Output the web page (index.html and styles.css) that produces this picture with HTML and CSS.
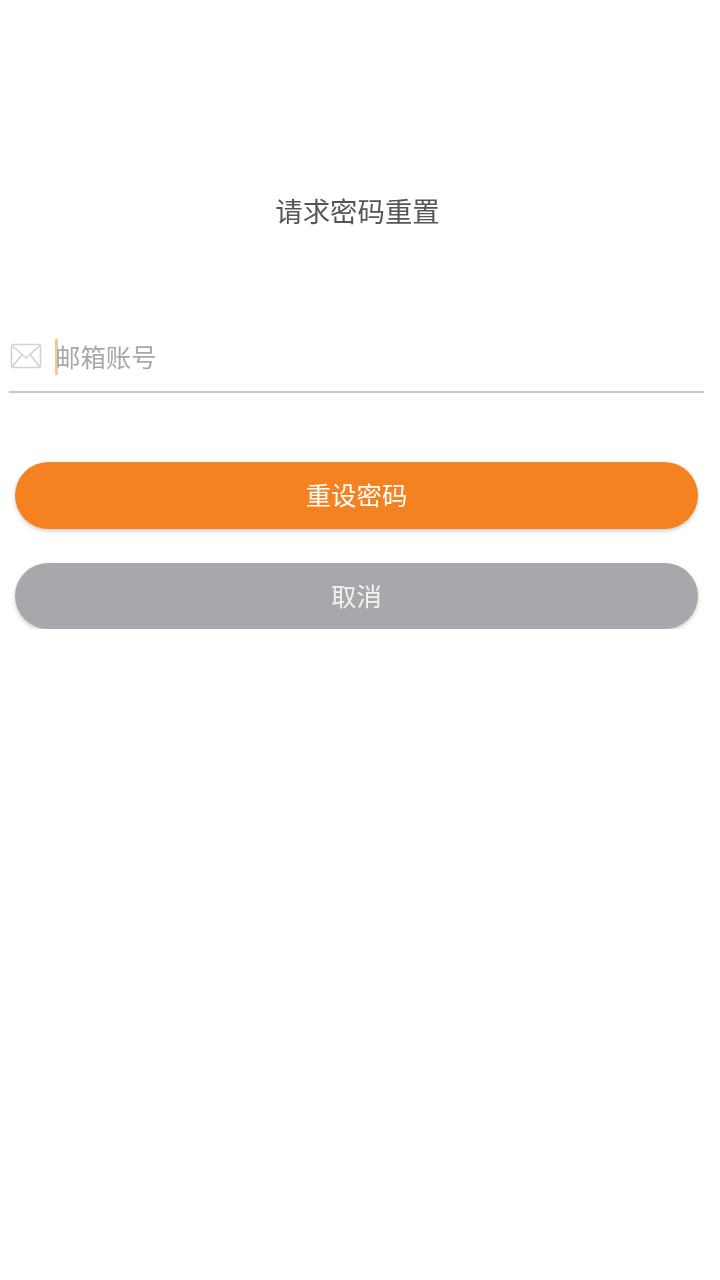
FILE: index.html
```html
<!DOCTYPE html>
<html lang="zh-CN">
<head>
    <meta charset="UTF-8">
    <meta name="viewport" content="width=device-width, initial-scale=1.0">
    <title>请求密码重置</title>
    <link rel="stylesheet" href="styles.css">
</head>
<body>
    <h1 class="title">请求密码重置</h1>
    <div class="field">
        <svg class="mail-icon" width="32" height="27" viewBox="0 0 32 27" fill="none" stroke="#d2d2d4" stroke-width="1.6">
            <rect x="1.5" y="1.5" width="29" height="23" rx="2"/>
            <path d="M2 2.5 L16 15 L30 2.5"/>
            <path d="M2 24 L12 11.5"/>
            <path d="M30 24 L20 11.5"/>
        </svg>
        <span class="caret"></span>
        <span class="placeholder">邮箱账号</span>
    </div>
    <div class="buttons">
        <button class="btn btn-primary">重设密码</button>
        <button class="btn btn-cancel">取消</button>
    </div>
</body>
</html>
```

FILE: styles.css
```css
body {
    margin: 0;
    background-color: #fff;
    font-family: "Roboto", "Noto Sans CJK SC", sans-serif;
}
.title {
    margin: 0 5px 0 0;
    padding-top: 195px;
    height: 36px;
    line-height: 36px;
    text-align: center;
    font-size: 27.4px;
    font-weight: 400;
    color: #555;
    filter: blur(0.6px);
}
.field {
    display: flex;
    align-items: center;
    height: 61px;
    margin: 99px 16px 0 9px;
    border-bottom: 2px solid #cacacc;
    filter: blur(0.5px);
}
.mail-icon {
    margin-left: 1px;
    margin-top: -9px;
    flex-shrink: 0;
}
.caret {
    width: 3px;
    height: 36px;
    margin-left: 13px;
    margin-top: -8px;
    background-color: #f9c796;
}
.placeholder {
    margin-left: -3px;
    margin-top: -9px;
    font-size: 25.4px;
    color: #a8a8aa;
}
.buttons {
    display: flex;
    flex-direction: column;
    gap: 34px;
    margin: 69px 22px 0 15px;
}
.btn {
    display: block;
    height: 67px;
    padding: 0 0 3px;
    border: none;
    border-radius: 34px;
    font-family: inherit;
    font-size: 25.4px;
    color: #fff;
    filter: blur(0.5px);
}
.btn-primary {
    background-color: #f58220;
    box-shadow: 0 2px 4px rgba(0,0,0,0.2);
}
.btn-cancel {
    height: 66px;
    background-color: #a8a8ac;
    box-shadow: 0 2px 4px rgba(0,0,0,0.2);
    color: #f2f2f2;
}
```
